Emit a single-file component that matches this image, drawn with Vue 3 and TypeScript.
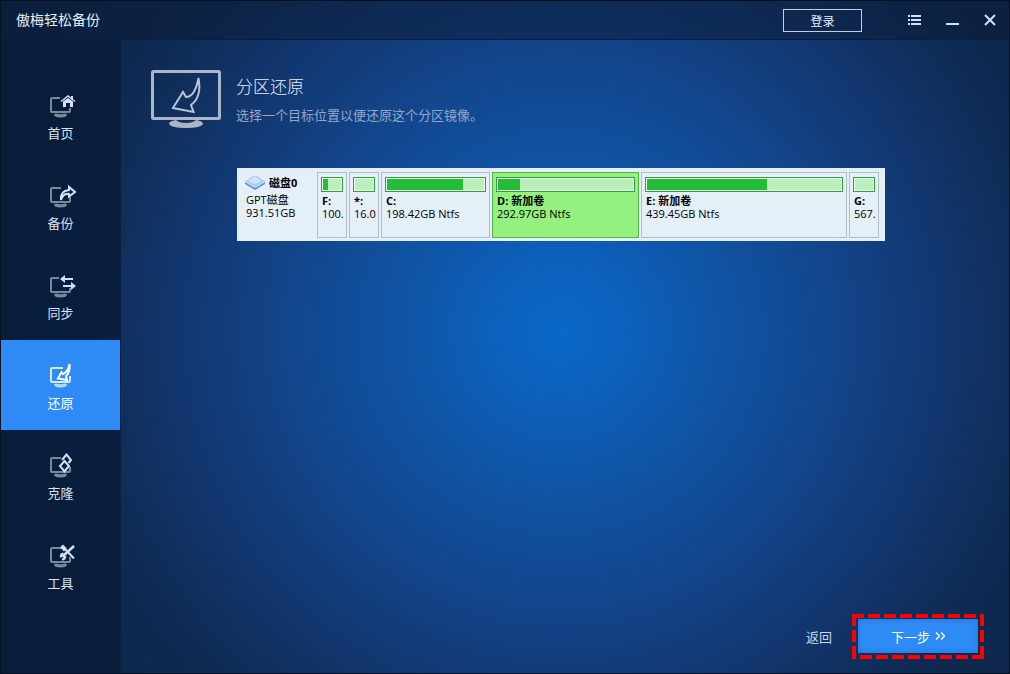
<script setup lang="ts">
interface NavItem {
  id: string
  label: string
}

interface Partition {
  name: string
  size: string
  used: number
  selected?: boolean
}

const navItems: NavItem[] = [
  { id: 'home', label: '首页' },
  { id: 'backup', label: '备份' },
  { id: 'sync', label: '同步' },
  { id: 'restore', label: '还原' },
  { id: 'clone', label: '克隆' },
  { id: 'tools', label: '工具' },
]

const activeId = 'restore'

const partitions: Partition[] = [
  { name: 'F:', size: '100.', used: 28 },
  { name: '*:', size: '16.0', used: 0 },
  { name: 'C:', size: '198.42GB Ntfs', used: 78 },
  { name: 'D: 新加卷', size: '292.97GB Ntfs', used: 16, selected: true },
  { name: 'E: 新加卷', size: '439.45GB Ntfs', used: 62 },
  { name: 'G:', size: '567.', used: 0 },
]
</script>

<template>
  <div class="window">
    <header class="titlebar">
      <h1 class="app-name">傲梅轻松备份</h1>
      <button class="login" type="button">登录</button>
      <div class="controls">
        <button type="button" aria-label="菜单">
          <svg width="14" height="14" viewBox="0 0 14 14" fill="currentColor">
            <path d="M0 2h2v2H0zM3 2h10v2H3zM0 6h2v2H0zM3 6h10v2H3zM0 10h2v2H0zM3 10h10v2H3z" />
          </svg>
        </button>
        <button type="button" aria-label="最小化">
          <svg width="14" height="14" viewBox="0 0 14 14" fill="currentColor">
            <path d="M0 10h13v2H0z" />
          </svg>
        </button>
        <button type="button" aria-label="关闭">
          <svg width="14" height="14" viewBox="0 0 14 14" fill="none" stroke="currentColor" stroke-width="2">
            <path d="M1 2l10 10M11 2L1 12" />
          </svg>
        </button>
      </div>
    </header>

    <div class="body">
      <nav class="sidebar">
        <button
          v-for="item in navItems"
          :key="item.id"
          type="button"
          class="nav-item"
          :class="{ active: item.id === activeId }"
        >
          <svg class="nav-icon" width="33" height="26" viewBox="0 0 33 26" fill="none">
            <g class="screen">
              <path v-if="item.id === 'sync'" d="M15 5H8Q7 5 7 6V18Q7 19 8 19H25Q26 19 26 18V15" />
              <path v-else-if="item.id === 'home'" d="M16 5H8Q7 5 7 6V18Q7 19 8 19H25Q26 19 26 18V15" />
              <path v-else-if="item.id === 'restore'" d="M19 5H8Q7 5 7 6V18Q7 19 8 19H25Q26 19 26 18V13" />
              <path v-else d="M17 5H8Q7 5 7 6V18Q7 19 8 19H25Q26 19 26 18V14" />
              <path class="foot" d="M10 22Q10 20.500 12 20.500Q16.500 22 21 20.500Q23 20.500 23 22Q22 24.500 16.500 24.500Q11 24.500 10 22Z" />
            </g>
            <g v-if="item.id === 'home'" class="mark">
              <path class="solid" d="M19 8.500L24 5L29 8.500V14H26V10H22V14H19Z" />
              <path d="M17 8.500L24 3L31 8.500" stroke-width="1.500" />
              <path class="solid" d="M27 3h2v3h-2z" />
            </g>
            <g v-else-if="item.id === 'backup'" class="mark">
              <path d="M17 17Q16 8 25 7V4L31 9L25 13.500V11Q19 10 17 17Z" stroke-width="2" />
            </g>
            <g v-else-if="item.id === 'sync'" class="mark">
              <path d="M19 6H29M19 13H28" stroke-width="2" />
              <path class="solid" d="M16 6L21 2V10ZM32 13L27 9V17Z" />
            </g>
            <g v-else-if="item.id === 'restore'" class="mark">
              <path d="M25.500 1Q26.500 9 22 13L23 17L14 15.500L17.500 9L19 11Q24 9 25.500 1Z" stroke-width="2" />
            </g>
            <g v-else-if="item.id === 'clone'" class="mark">
              <path d="M20.500 8L25 13L20.500 18.500L16 13Z" stroke-width="2" />
              <path d="M18 7L22.500 1.500L27 7L24.500 10" stroke-width="2" />
            </g>
            <g v-else class="mark">
              <path d="M20 5L30 15.500" stroke-width="2" />
              <path d="M17.500 3L21.500 7" stroke-width="4" />
              <path d="M30 3L19 13" stroke-width="2.500" />
              <path d="M19.500 10.500Q16 11 17 14.500M21.500 13Q21 16.500 18 16.500M17 11L20 14" stroke-width="2" />
            </g>
          </svg>
          <span>{{ item.label }}</span>
        </button>
      </nav>

      <main class="content">
        <section class="intro">
          <svg class="intro-icon" width="70" height="60" viewBox="0 0 70 60" fill="none">
            <rect x="1.500" y="1.500" width="67" height="47" rx="1" stroke="#aab6c8" stroke-width="3" />
            <path d="M18 54Q18 51 25 50Q28 53 35 53Q42 53 45 50Q52 51 52 54Q50 58 35 58Q20 58 18 54Z" fill="#aab6c8" />
            <path
              d="M47.500 8Q51 27 40 35L42.500 42L22 38L32 22L35 27Q44 27 47.500 8Z"
              stroke="#b9c3d4"
              stroke-width="2"
            />
          </svg>
          <div class="intro-text">
            <h2>分区还原</h2>
            <p>选择一个目标位置以便还原这个分区镜像。</p>
          </div>
        </section>

        <section class="disk">
          <div class="disk-info">
            <div class="disk-title">
              <svg width="20" height="16" viewBox="0 0 20 16">
                <path d="M0 6V9L9 14.500Q10 15 11 14.500L20 9V6Z" fill="#5f93da" />
                <path d="M0 6.500L7 1.500Q9.500 0 13 1.500L20 6.500L12 11.500Q10 12.500 8 11.500Z" fill="#a9cdf7" />
                <path d="M3 6L8 2.500Q10 1.500 12 2.500L16 6L10 9Z" fill="#cfe4fc" />
                <path d="M0 6.500L8 11.500Q10 12.500 12 11.500L20 6.500" fill="none" stroke="#d9eafd" />
              </svg>
              <strong>磁盘0</strong>
            </div>
            <span>GPT磁盘</span>
            <span>931.51GB</span>
          </div>
          <div class="partitions">
            <button
              v-for="part in partitions"
              :key="part.name"
              type="button"
              class="partition"
              :class="{ selected: part.selected }"
            >
              <span class="bar"><span class="used" :style="{ width: part.used + '%' }"></span></span>
              <strong>{{ part.name }}</strong>
              <span class="size">{{ part.size }}</span>
            </button>
          </div>
        </section>

        <footer class="actions">
          <button class="back" type="button">返回</button>
          <div class="next-frame">
            <svg class="dashes" aria-hidden="true">
              <line x1="0" y1="0" x2="100%" y2="0" />
              <line x1="100%" y1="0" x2="100%" y2="100%" />
              <line x1="0" y1="100%" x2="100%" y2="100%" stroke-dashoffset="8" />
              <line x1="0" y1="0" x2="0" y2="100%" />
            </svg>
            <button class="next" type="button">
              <span>下一步</span>
              <svg width="10" height="8" viewBox="0 0 10 8" fill="none" stroke="currentColor" stroke-width="1.300">
                <path d="M1 0.500L4.500 4L1 7.500M6 0.500L9.500 4L6 7.500" />
              </svg>
            </button>
          </div>
        </footer>
      </main>
    </div>
  </div>
</template>

<style>
body {
  margin: 0;
  background: #0a1a33;
}
</style>

<style scoped>
* {
  box-sizing: border-box;
}

.window {
  display: flex;
  flex-direction: column;
  min-height: 100vh;
  border: 1px solid #06101f;
  background: radial-gradient(
    circle at 560px 330px,
    #0a68c8 0,
    #0c60bb 70px,
    #1052a2 170px,
    #12468c 270px,
    #123872 370px,
    #0f2b54 480px,
    #0d2445 600px
  );
  color: #e6eefb;
  font-family: "Liberation Sans", "Noto Sans CJK SC", sans-serif;
  font-size: 13px;
}

button {
  padding: 0;
  border: 0;
  background: none;
  color: inherit;
  font: inherit;
}

.titlebar {
  display: flex;
  align-items: center;
  height: 39px;
  padding: 0 11px 0 15px;
  border-bottom: 1px solid #0b1d3a;
  background: rgba(9, 26, 52, 0.5);
}

.app-name {
  flex: 1;
  margin: 0;
  font-size: 14px;
  font-weight: 400;
  line-height: 20px;
}

.login {
  width: 79px;
  height: 23px;
  border: 1px solid #c3cee0;
  font-size: 12px;
}

.controls {
  display: flex;
  gap: 24px;
  margin-left: 46px;
  color: #d3dff5;
}

.controls button,
.controls svg {
  display: block;
}

.body {
  display: flex;
  flex: 1;
}

.sidebar {
  width: 120px;
  padding-top: 30px;
  border-right: 1px solid #0b1f3e;
  background: rgba(9, 29, 57, 0.88);
}

.nav-item {
  display: flex;
  flex-direction: column;
  align-items: center;
  gap: 5px;
  width: 100%;
  height: 90px;
  padding-top: 23px;
  line-height: 20px;
  color: #d6e2f7;
}

.nav-item.active {
  background: #2e8bf5;
  color: #ffffff;
}

.screen {
  stroke: #7a889e;
  stroke-width: 2;
}

.foot {
  fill: #7a889e;
  stroke: none;
}

.mark {
  stroke: #d3dff2;
}

.mark .solid {
  fill: #d3dff2;
  stroke: none;
}

.active .screen {
  stroke: #d5e8fd;
}

.active .foot {
  fill: #b5d6fb;
}

.active .mark {
  stroke: #ffffff;
}

.content {
  display: flex;
  flex: 1;
  flex-direction: column;
  min-width: 0;
  padding: 30px 25px 14px 30px;
}

.intro {
  display: flex;
  gap: 15px;
  height: 98px;
}

.intro-text h2 {
  margin: 6px 0 0;
  font-size: 17px;
  font-weight: 300;
  line-height: 24px;
}

.intro-text p {
  margin: 6px 0 0;
  color: #94a8c9;
  line-height: 20px;
}

.disk {
  display: flex;
  margin: 0 99px 0 86px;
  padding: 4px 6px 3px 9px;
  background: #e4eff8;
  color: #000000;
  font-family: "Open Sans", "Noto Sans CJK SC", sans-serif;
  font-size: 11px;
  line-height: 13px;
}

.disk-info {
  display: flex;
  flex-direction: column;
  width: 71px;
}

.disk-title {
  display: flex;
  align-items: center;
  gap: 4px;
  height: 21px;
  margin-left: -1px;
}

.partitions {
  display: grid;
  flex: 1;
  grid-template-columns: 30px 30px 109fr 147fr 206fr 30px;
  gap: 2px;
  min-width: 0;
}

.partition {
  display: flex;
  flex-direction: column;
  min-width: 0;
  height: 66px;
  padding: 4px 3px;
  border: 1px solid #b3bcc8;
  text-align: left;
}

.partition.selected {
  border-color: #58b24a;
  background: #94f17f;
}

.bar {
  height: 15px;
  margin-bottom: 2px;
  padding: 1px;
  border: 1px solid #2fa040;
  background: linear-gradient(#baeeba, #baeeba) content-box, #f4fff4;
}

.used {
  display: block;
  height: 100%;
  background: #23bd37;
}

.size,
.partition strong {
  padding-left: 1px;
  white-space: nowrap;
}

.actions {
  display: flex;
  align-items: center;
  justify-content: flex-end;
  gap: 20px;
  margin-top: auto;
}

.back {
  color: #c9d6ec;
}

.next-frame {
  position: relative;
  padding: 5px 6px 6px;
}

.dashes {
  position: absolute;
  inset: 0;
  width: 100%;
  height: 100%;
}

.dashes line {
  stroke: #ff0000;
  stroke-width: 8;
  stroke-dasharray: 12 4;
}

.next {
  position: relative;
  display: flex;
  align-items: center;
  justify-content: center;
  gap: 5px;
  width: 120px;
  height: 34px;
  background: #2e8bf5;
  box-shadow: inset 0 0 6px #2475d6;
  color: #ffffff;
}
</style>
